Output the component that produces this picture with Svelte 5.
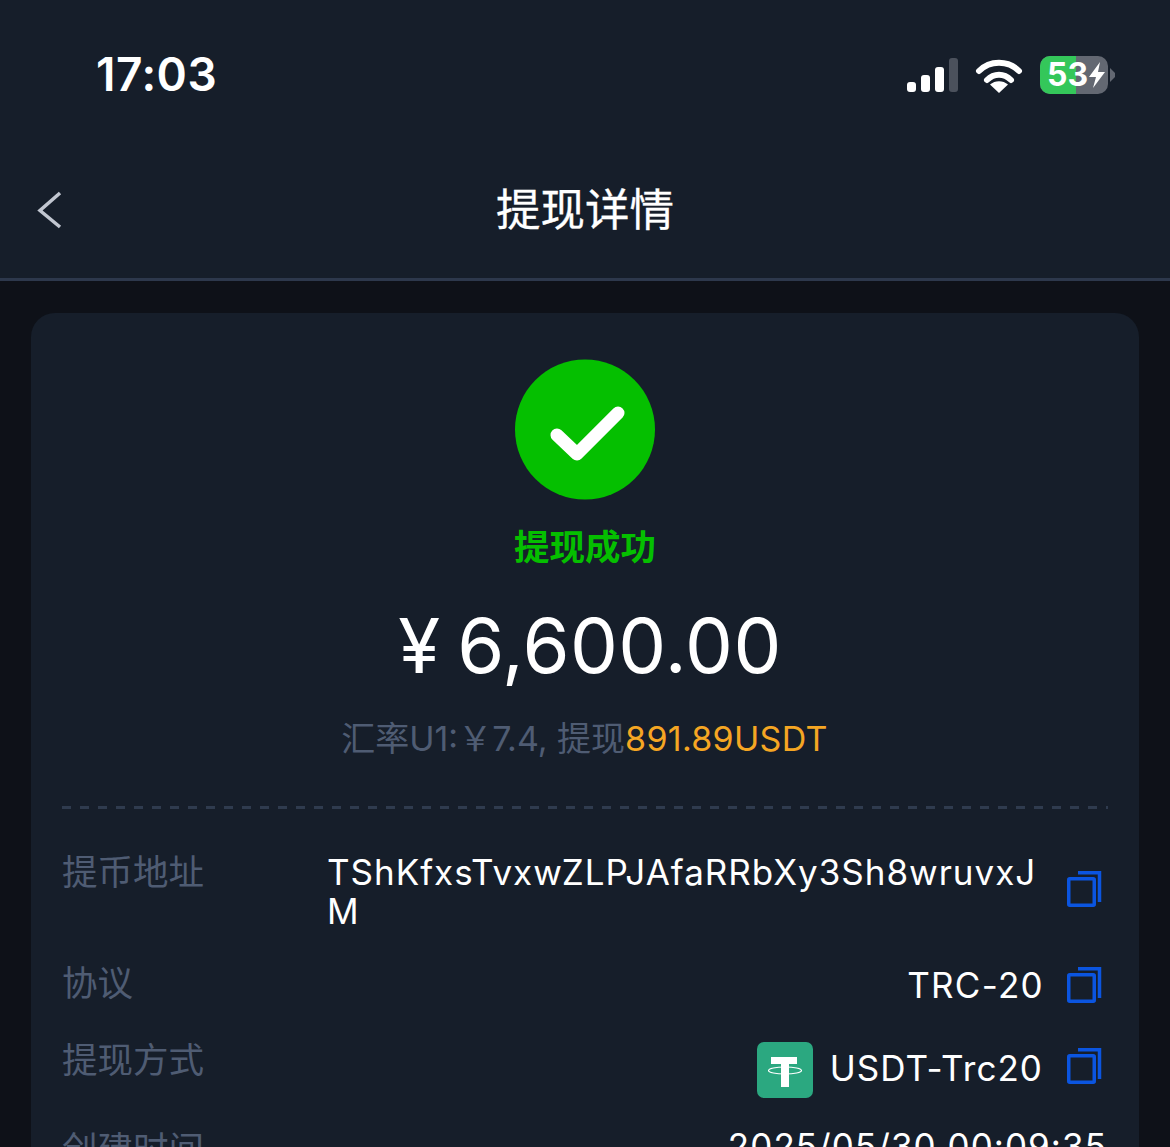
<script>
</script>

{#snippet copyIcon()}
  <svg class="copy" width="35" height="36" viewBox="0 0 35 36" fill="none" stroke="#0b55e0" stroke-width="3.5">
    <rect x="1.750" y="7.750" width="25.500" height="26.500" rx="1" />
    <path d="M11 1.750H32.500V31" />
  </svg>
{/snippet}

<div class="page">
  <header class="head">
    <div class="status">
      <span class="time">17:03</span>
      <div class="indicators">
        <svg width="52" height="36" viewBox="0 0 52 36">
          <rect x="1" y="25" width="9" height="10" rx="3" fill="#fff" />
          <rect x="15" y="18" width="9" height="17" rx="3" fill="#fff" />
          <rect x="29" y="10" width="9" height="25" rx="3" fill="#fff" />
          <rect x="43" y="1" width="9" height="34" rx="3" fill="#4b515c" />
        </svg>
        <svg width="48" height="36" viewBox="0 0 48 36" fill="none">
          <path d="M4 14C15 3 33 3 44 14" stroke="#fff" stroke-width="6" stroke-linecap="round" />
          <path d="M12 23C19 16 29 16 36 23" stroke="#fff" stroke-width="6" stroke-linecap="round" />
          <path d="M24 36L15 27.500C20 23 28 23 33 27.500z" fill="#fff" />
        </svg>
        <div class="battery">
          <div class="cell">
            <span class="fill"></span>
            <span class="pct">53</span>
            <svg class="bolt" width="18" height="28" viewBox="0 0 18 28"><path d="M12 1L1 16h7l-3 11L17 11h-7z" fill="#fff" /></svg>
          </div>
          <span class="nub"></span>
        </div>
      </div>
    </div>
    <nav class="nav">
      <svg class="back" width="26" height="38" viewBox="0 0 26 38" fill="none">
        <path d="M23 2L3 19.500 23 36" stroke="#c1c6d0" stroke-width="3.500" />
      </svg>
      <h1>提现详情</h1>
    </nav>
  </header>

  <main class="card">
    <section class="summary">
      <div class="ok">
        <svg width="140" height="141" viewBox="0 0 140 141">
          <circle cx="70" cy="70.500" r="70" fill="#05bf00" />
          <path d="M42 76L62 95 103 54" fill="none" stroke="#fff" stroke-width="13" stroke-linecap="round" stroke-linejoin="round" />
        </svg>
      </div>
      <div class="result">提现成功</div>
      <div class="amount">¥ 6,600.00</div>
      <div class="rate">汇率U1:￥7.4, 提现<em>891.89USDT</em></div>
    </section>
    <div class="dash"></div>
    <section>
      <div class="row r1">
        <span class="k">提币地址</span>
        <span class="addr">TShKfxsTvxwZLPJAfaRRbXy3Sh8wruvxJM</span>
        {@render copyIcon()}
      </div>
      <div class="row r2">
        <span class="k">协议</span>
        <span class="v">TRC-20</span>
        {@render copyIcon()}
      </div>
      <div class="row r3">
        <span class="k">提现方式</span>
        <span class="v with-logo">
          <svg width="56" height="56" viewBox="0 0 56 56">
            <rect width="56" height="56" rx="7" fill="#2ba880" />
            <rect x="14" y="15" width="26" height="7" fill="#fff" />
            <rect x="24" y="22" width="8" height="23" fill="#fff" />
            <ellipse cx="28" cy="28.500" rx="16.500" ry="3.500" fill="none" stroke="#fff" stroke-width="1.200" />
          </svg>
          <span class="logo-text">USDT-Trc20</span>
        </span>
        {@render copyIcon()}
      </div>
      <div class="row r4">
        <span class="k">创建时间</span>
        <span class="v">2025/05/30 00:09:35</span>
      </div>
    </section>
  </main>
</div>

<style>
  :global(body) {
    margin: 0;
    background: #0e1118;
  }
  .page {
    height: 1147px;
    overflow: hidden;
    font-family: Inter, "Noto Sans CJK SC", sans-serif;
    color: #fff;
  }
  .head {
    background: #161e2a;
    border-bottom: 3px solid #2d384c;
    height: 278px;
  }
  .status {
    height: 140px;
    padding: 8px 55px 0 96px;
    display: flex;
    align-items: center;
    justify-content: space-between;
    box-sizing: border-box;
  }
  .time {
    font-size: 46px;
    font-weight: 600;
    line-height: 1;
    letter-spacing: 0.5px;
  }
  .indicators {
    display: flex;
    align-items: center;
    gap: 17px;
    padding-top: 2px;
  }
  .battery {
    display: flex;
    align-items: center;
    gap: 2px;
  }
  .cell {
    position: relative;
    width: 68px;
    height: 38px;
    border-radius: 10px;
    background: #636872;
    overflow: hidden;
    display: flex;
    align-items: center;
    padding-left: 7px;
    box-sizing: border-box;
  }
  .fill {
    position: absolute;
    left: 0;
    top: 0;
    bottom: 0;
    width: 36px;
    background: #34c75a;
  }
  .pct {
    position: relative;
    font-size: 32px;
    font-weight: 700;
    line-height: 1;
  }
  .bolt {
    position: relative;
  }
  .nub {
    width: 5px;
    height: 14px;
    background: #636872;
    clip-path: polygon(0 0, 100% 35%, 100% 65%, 0 100%);
  }
  .nav {
    height: 138px;
    display: flex;
    align-items: center;
    justify-content: center;
    position: relative;
  }
  .back {
    position: absolute;
    left: 37px;
    top: 51px;
  }
  h1 {
    margin: 0;
    font-size: 44.500px;
    font-weight: 400;
    line-height: 1;
    padding-top: 2px;
    -webkit-text-stroke: 0.3px #fff;
  }
  .card {
    margin: 32px 31px 0;
    background: #161e2a;
    border-radius: 24px;
    padding: 46px 31px 40px;
    height: 1000px;
  }
  .summary {
    display: flex;
    flex-direction: column;
    align-items: center;
  }
  .ok {
    height: 140px;
  }
  .result {
    color: #05bf00;
    font-size: 35.500px;
    font-weight: 700;
    line-height: 48px;
    margin-top: 25px;
  }
  .amount {
    font-size: 76px;
    line-height: 92px;
    margin-top: 27px;
    padding-left: 10px;
    word-spacing: -5px;
    letter-spacing: 0.4px;
  }
  .rate {
    color: #4f5c73;
    font-size: 34px;
    line-height: 44px;
    margin-top: 26px;
    padding-right: 1px;
  }
  .rate em {
    font-style: normal;
    color: #f5a623;
    letter-spacing: 0.3px;
  }
  .dash {
    height: 3px;
    margin-top: 45px;
    background: repeating-linear-gradient(90deg, #2f3b4e 0 9px, transparent 9px 18px);
  }
  .row {
    display: flex;
    align-items: flex-start;
    font-size: 35px;
    line-height: 40px;
    letter-spacing: 1.05px;
    padding-right: 6px;
  }
  .k {
    color: #4f5c73;
    font-size: 35.500px;
    letter-spacing: 0;
    margin-right: auto;
  }
  .addr {
    width: 717px;
    word-break: break-all;
    flex: none;
    line-height: 39px;
    letter-spacing: 0.98px;
  }
  .copy {
    flex: none;
    margin-left: 23px;
  }
  .r1 {
    margin-top: 44px;
    height: 111px;
  }
  .r1 .copy {
    margin-top: 18px;
  }
  .r2 {
    height: 77px;
  }
  .r2 .v {
    margin-top: 1px;
    letter-spacing: 1.3px;
  }
  .r2 .copy {
    margin-top: 3px;
  }
  .r3 {
    height: 89px;
  }
  .r3 .copy {
    margin-top: 7px;
  }
  .with-logo {
    display: flex;
    align-items: flex-start;
    gap: 17px;
    margin-top: 1px;
    margin-right: 1px;
  }
  .logo-text {
    margin-top: 6px;
  }
  .r4 {
    padding-right: 1px;
  }
  .r4 .v {
    margin-top: -4px;
  }
</style>
